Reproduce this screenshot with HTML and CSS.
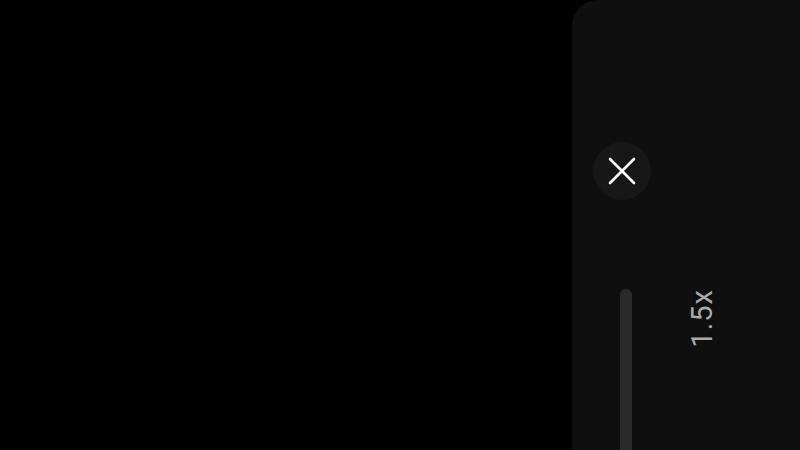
FILE: index.html
```html
<!DOCTYPE html>
<html lang="en">
<head>
    <meta charset="UTF-8">
    <meta name="viewport" content="width=device-width, initial-scale=1.0">
    <title>Camera Zoom</title>
    <link rel="stylesheet" href="styles.css">
</head>
<body>
    <div class="viewfinder"></div>

    <aside class="controls">
        <button class="close-btn" aria-label="Close">
            <svg width="28" height="28" viewBox="0 0 28 28">
                <path d="M2 2L26 26M26 2L2 26" stroke="#ffffff" stroke-width="2.6" stroke-linecap="round"/>
            </svg>
        </button>

        <div class="zoom">
            <div class="zoom-track"></div>
            <span class="zoom-label">1.5x</span>
        </div>
    </aside>
</body>
</html>
```

FILE: styles.css
```css
html {
    background: #000000;
}

body {
    margin: 0;
    width: 800px;
    height: 450px;
    overflow: hidden;
    display: flex;
    background: #000000;
    font-family: Roboto, 'Noto Sans', sans-serif;
}

.viewfinder {
    flex: 1;
}

.controls {
    width: 228px;
    height: 100%;
    box-sizing: border-box;
    background: #0f0f0f;
    border-top-left-radius: 26px;
    display: flex;
    flex-direction: column;
    padding-top: 142px;
    padding-left: 21px;
}

.close-btn {
    width: 58px;
    height: 58px;
    border: none;
    border-radius: 50%;
    background: #171717;
    padding: 0;
    display: flex;
    align-items: center;
    justify-content: center;
    cursor: pointer;
}

.zoom {
    display: flex;
    margin-top: 89px;
    flex: 1;
}

.zoom-track {
    width: 12px;
    margin-left: 27px;
    background: #2a2a2a;
    border-radius: 6px 6px 0 0;
}

.zoom-label {
    margin-left: 57px;
    align-self: flex-start;
    writing-mode: vertical-rl;
    transform: rotate(180deg);
    font-size: 29px;
    letter-spacing: 1px;
    color: #a9a9a9;
    line-height: 26px;
}
```
